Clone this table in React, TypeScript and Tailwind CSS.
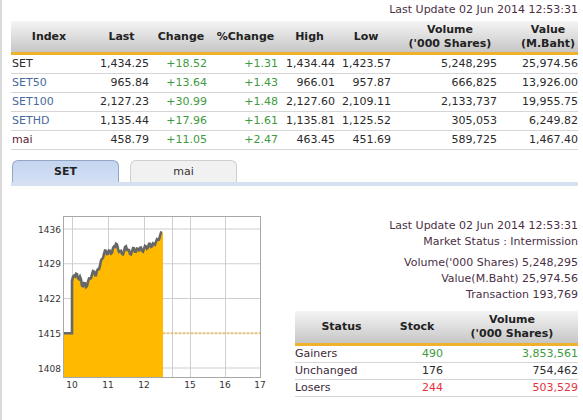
import React from 'react';

type Row = {
  name: string;
  nameColor: string;
  last: string;
  change: string;
  pct: string;
  high: string;
  low: string;
  volume: string;
  value: string;
};

const rows: Row[] = [
  { name: 'SET', nameColor: 'text-[#2a2a2a]', last: '1,434.25', change: '+18.52', pct: '+1.31', high: '1,434.44', low: '1,423.57', volume: '5,248,295', value: '25,974.56' },
  { name: 'SET50', nameColor: 'text-[#4a6a9c]', last: '965.84', change: '+13.64', pct: '+1.43', high: '966.01', low: '957.87', volume: '666,825', value: '13,926.00' },
  { name: 'SET100', nameColor: 'text-[#4a6a9c]', last: '2,127.23', change: '+30.99', pct: '+1.48', high: '2,127.60', low: '2,109.11', volume: '2,133,737', value: '19,955.75' },
  { name: 'SETHD', nameColor: 'text-[#4a6a9c]', last: '1,135.44', change: '+17.96', pct: '+1.61', high: '1,135.81', low: '1,125.52', volume: '305,053', value: '6,249.82' },
  { name: 'mai', nameColor: 'text-[#5a2134]', last: '458.79', change: '+11.05', pct: '+2.47', high: '463.45', low: '451.69', volume: '589,725', value: '1,467.40' },
];

const cols = 'grid grid-cols-[76px_65px_58px_71px_57px_56px_106px_78px]';

// intraday points: [page x, index value]
const base: [number, number][] = [
  [72, 1425.5], [74, 1426.6], [76, 1427], [78, 1426.1], [80, 1426.4], [82, 1424.6], [84, 1425.1], [86, 1424.3],
  [88, 1425.4], [90, 1426], [92, 1426.9], [94, 1427.4], [96, 1426.7], [98, 1427.9], [100, 1428.6], [102, 1430],
  [104, 1431], [106, 1431.6], [108, 1431], [110, 1431.6], [112, 1431.2], [114, 1432.5], [116, 1433], [118, 1432],
  [120, 1431.5], [122, 1431], [124, 1431.5], [126, 1432.5], [128, 1431.8], [130, 1431], [132, 1431.5], [134, 1432.1],
  [136, 1431.4], [138, 1432], [140, 1432.2], [142, 1431.6], [144, 1432], [146, 1432.5], [148, 1432.3], [150, 1433],
  [152, 1432.5], [154, 1433], [156, 1433.4], [158, 1433.8], [160, 1434.6], [162, 1435.3],
];

// add small tick-by-tick wiggle between the points
const points: [number, number][] = [];
base.forEach((p, i) => {
  points.push(p);
  const next = base[i + 1];
  if (next) points.push([p[0] + 1, (p[1] + next[1]) / 2 + (i % 2 === 0 ? 0.35 : -0.35)]);
});

const OX = 11;
const OY = 186;
const yOf = (v: number) => 368 - (v - 1408) * 4.964 - OY;
const xOf = (x: number) => x - OX;

function Chart() {
  const line =
    `M${xOf(64)},${yOf(1415)} L${xOf(72)},${yOf(1415)} ` +
    points.map(([x, v]) => `L${xOf(x)},${yOf(v).toFixed(1)}`).join(' ');
  const area = line + ` L${xOf(163)},${yOf(1435.3).toFixed(1)} L${xOf(163)},${378 - OY} L${xOf(64)},${378 - OY} Z`;
  const hLines = [1436, 1429, 1422, 1415, 1408];
  const vLines = [72, 108, 144, 172, 190, 225];
  const xLabels: [number, string][] = [[72, '10'], [108, '11'], [144, '12'], [190, '15'], [225, '16'], [260, '17']];
  return (
    <svg width={279} height={234} className="block">
      <rect x={xOf(64)} y={217 - OY} width={197} height={161} fill="#ffffff" />
      {hLines.map((v) => (
        <line key={v} x1={xOf(64)} x2={xOf(261)} y1={yOf(v)} y2={yOf(v)} stroke="#cfcfcf" strokeWidth={1} />
      ))}
      {vLines.map((x) => (
        <line key={x} x1={xOf(x) + 0.5} x2={xOf(x) + 0.5} y1={217 - OY} y2={378 - OY} stroke="#cfcfcf" strokeWidth={1} />
      ))}
      <path d={area} fill="#ffba00" />
      <path d={line} fill="none" stroke="#676767" strokeWidth={2.6} strokeLinejoin="miter" />
      <line x1={xOf(163)} x2={xOf(261)} y1={yOf(1415)} y2={yOf(1415)} stroke="#f3c466" strokeWidth={2} strokeDasharray="2 2" />
      <rect x={xOf(64) - 0.5} y={217 - OY - 0.5} width={197} height={161} fill="none" stroke="#a8a8a8" strokeWidth={1} />
      {hLines.map((v) => (
        <text key={v} x={xOf(61)} y={yOf(v) + 3.5} textAnchor="end" fontSize={9} fill="#333" fontFamily="DejaVu Sans">
          {v}
        </text>
      ))}
      {xLabels.map(([x, t]) => (
        <text key={t} x={xOf(x)} y={388 - OY} textAnchor="middle" fontSize={9} fill="#333" fontFamily="DejaVu Sans">
          {t}
        </text>
      ))}
    </svg>
  );
}

const App: React.FC = () => {
  return (
    <div className="w-[583px] h-[420px] overflow-hidden bg-white border-l-2 border-[#dadada] pl-[9px] pr-[5px] font-['DejaVu_Sans',sans-serif] text-[11px] text-[#333]">
      {/* top update stamp */}
      <div className="h-[21px] leading-[20px] text-right text-[#4b2f46]">Last Update 02 Jun 2014 12:53:31</div>

      {/* index table */}
      <div className={`${cols} h-[34px] border-b-[3px] border-[#f0b12d] bg-gradient-to-b from-[#f5f5f5] to-[#c6c6c6] font-bold text-[#222] leading-[14px] items-center`}>
        <div className="text-center">Index</div>
        <div className="text-center pl-[4px]">Last</div>
        <div className="text-center">Change</div>
        <div className="text-center">%Change</div>
        <div className="text-center">High</div>
        <div className="text-center">Low</div>
        <div className="text-center pl-[6px]">Volume<br />('000 Shares)</div>
        <div className="text-center pl-[18px]">Value<br />(M.Baht)</div>
      </div>
      {rows.map((r) => (
        <div key={r.name} className={`${cols} h-[19px] leading-[18px] border-b border-[#d6d6d6] text-[#2a2a2a]`}>
          <div className={`pl-[1px] ${r.nameColor}`}>{r.name}</div>
          <div className="text-right pr-[3px]">{r.last}</div>
          <div className="text-right pr-[3px] text-[#3e9a3e]">{r.change}</div>
          <div className="text-right pr-[3px] text-[#3e9a3e]">{r.pct}</div>
          <div className="text-right pr-[3px]">{r.high}</div>
          <div className="text-right pr-[3px]">{r.low}</div>
          <div className="text-right pr-[3px]">{r.volume}</div>
          <div className="text-right">{r.value}</div>
        </div>
      ))}

      {/* tabs */}
      <div className="mt-[10px] flex gap-[11px] pl-[1px] h-[22px]">
        <div className="w-[107px] h-[22px] rounded-t-[6px] border border-b-0 border-[#93a6c8] bg-gradient-to-b from-[#c4d5ef] to-[#d3e0f4] text-center leading-[21px] font-bold text-[#222]">
          SET
        </div>
        <div className="w-[107px] h-[22px] rounded-t-[6px] border border-b-0 border-[#cfcfcf] bg-[#f1f1f1] text-center leading-[21px] text-[#333]">
          mai
        </div>
      </div>
      <div className="h-[4px] bg-[#d5e0f3]" />

      {/* lower section */}
      <div className="flex">
        <div className="w-[279px] shrink-0">
          <Chart />
        </div>
        <div className="flex-1 pl-[5px]">
          <div className="pt-[32px] text-right text-[#4b2f46] leading-[16px]">
            <div>Last Update 02 Jun 2014 12:53:31</div>
            <div>Market Status : Intermission</div>
            <div className="mt-[5px]">Volume('000 Shares) 5,248,295</div>
            <div>Value(M.Baht) 25,974.56</div>
            <div>Transaction 193,769</div>
          </div>

          <div className="mt-[8px]">
            <div className="grid grid-cols-[93px_58px_1fr] h-[35px] border-b-[3px] border-[#f0b12d] bg-gradient-to-b from-[#f5f5f5] to-[#c6c6c6] font-bold text-[#222] leading-[14px] items-center">
              <div className="text-center">Status</div>
              <div className="text-center">Stock</div>
              <div className="text-center">Volume<br />('000 Shares)</div>
            </div>
            <div className="grid grid-cols-[93px_58px_1fr] h-[17px] leading-[16px] border-b border-[#d6d6d6]">
              <div className="text-[#3b2a3a]">Gainers</div>
              <div className="text-right pr-[3px] text-[#3e9a3e]">490</div>
              <div className="text-right text-[#3e9a3e]">3,853,561</div>
            </div>
            <div className="grid grid-cols-[93px_58px_1fr] h-[17px] leading-[16px] border-b border-[#d6d6d6]">
              <div className="text-[#3b2a3a]">Unchanged</div>
              <div className="text-right pr-[3px] text-[#2a2a2a]">176</div>
              <div className="text-right text-[#2a2a2a]">754,462</div>
            </div>
            <div className="grid grid-cols-[93px_58px_1fr] h-[17px] leading-[16px] border-b border-[#d6d6d6]">
              <div className="text-[#3b2a3a]">Losers</div>
              <div className="text-right pr-[3px] text-[#e5323c]">244</div>
              <div className="text-right text-[#e5323c]">503,529</div>
            </div>
          </div>
        </div>
      </div>
    </div>
  );
};

export default App;
